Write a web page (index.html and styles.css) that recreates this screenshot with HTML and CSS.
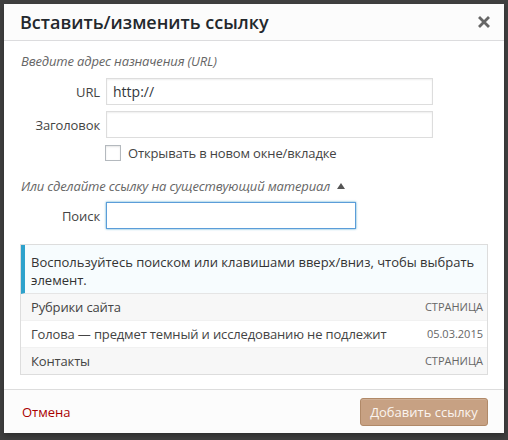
FILE: index.html
```html
<!DOCTYPE html>
<html lang="ru">
<head>
<meta charset="utf-8">
<link rel="stylesheet" href="styles.css">
</head>
<body>
<div class="backdrop">
  <div class="dialog">
    <div class="header">
      <h1 class="title">Вставить/изменить ссылку</h1>
      <span class="close"><svg width="12" height="12" viewBox="0 0 12 12"><path d="M2 2 L10 10 M10 2 L2 10" stroke="#666" stroke-width="2.8" stroke-linecap="square"/></svg></span>
    </div>
    <div class="body">
      <p class="howto">Введите адрес назначения (URL)</p>
      <div class="row">
        <label class="label">URL</label>
        <div class="input wide">http://</div>
      </div>
      <div class="row">
        <label class="label">Заголовок</label>
        <div class="input wide"></div>
      </div>
      <div class="row check-row">
        <span class="checkbox"></span>
        <span class="check-text">Открывать в новом окне/вкладке</span>
      </div>
      <p class="howto toggle">Или сделайте ссылку на существующий материал <span class="arrow"></span></p>
      <div class="row">
        <label class="label">Поиск</label>
        <div class="input search"></div>
      </div>
      <div class="results">
        <div class="notice">Воспользуйтесь поиском или клавишами вверх/вниз, чтобы выбрать элемент.</div>
        <ul class="list">
          <li class="item alt"><span>Рубрики сайта</span><span class="info">Страница</span></li>
          <li class="item"><span>Голова — предмет темный и исследованию не подлежит</span><span class="info date">05.03.2015</span></li>
          <li class="item alt"><span>Контакты</span><span class="info">Страница</span></li>
        </ul>
      </div>
    </div>
    <div class="footer">
      <a class="cancel">Отмена</a>
      <button class="submit">Добавить ссылку</button>
    </div>
  </div>
</div>
</body>
</html>
```
FILE: styles.css
```css
* { box-sizing: border-box; }
html, body { margin: 0; padding: 0; }
body {
  width: 508px;
  height: 440px;
  background: #404040;
  font-family: "Open Sans", "DejaVu Sans", sans-serif;
  font-size: 13px;
  color: #444;
  overflow: hidden;
}
.backdrop { padding: 4px 4px 0 4px; }
.dialog {
  width: 500px;
  height: 429px;
  background: #fff;
  display: flex;
  flex-direction: column;
  box-shadow: 0 3px 6px rgba(0,0,0,.3);
}
.header {
  height: 37px;
  background: #fcfcfc;
  border-bottom: 1px solid #dcdcde;
  display: flex;
  align-items: center;
  justify-content: space-between;
  padding: 0 14px 0 16px;
}
.title {
  margin: 0;
  font-size: 18px;
  font-weight: 600;
  color: #23282d;
  line-height: 36px;
}
.close { display: flex; width: 12px; height: 12px; margin-top: -1px; }
.body { flex: 1; padding: 0 16px; }
.howto {
  margin: 10px 0 0 1px;
  font-style: italic;
  color: #666;
  line-height: 20px;
  letter-spacing: -0.15px;
}
.row { display: flex; align-items: center; gap: 6px; margin-top: 6px; }
.howto + .row { margin-top: 7px; }
.label {
  width: 80px;
  text-align: right;
  color: #444;
  letter-spacing: -0.1px;
}
.input {
  height: 27px;
  border: 1px solid #ddd;
  box-shadow: inset 0 1px 2px rgba(0,0,0,.07);
  background: #fff;
  font-size: 14px;
  color: #32373c;
  padding: 0 6px;
  line-height: 25px;
}
.wide { width: 327px; }
.search {
  width: 250px;
  border-color: #5b9dd9;
  box-shadow: 0 0 2px rgba(30,140,190,.8);
}
.check-row { margin-top: 7px; gap: 7px; padding-left: 85px; }
.checkbox {
  width: 16px;
  height: 16px;
  border: 1px solid #b4b9be;
  box-shadow: inset 0 1px 2px rgba(0,0,0,.1);
  background: #fff;
}
.check-text { color: #444; line-height: 16px; letter-spacing: -0.15px; }
.toggle { margin-top: 15px; }
.toggle + .row { margin-top: 6px; }
.arrow {
  display: inline-block;
  width: 0; height: 0;
  border-left: 4px solid transparent;
  border-right: 4px solid transparent;
  border-bottom: 6px solid #555;
  margin-left: 4px;
  vertical-align: 2px;
}
.results {
  margin-top: 15px;
  border: 1px solid #ddd;
  height: 131px;
  overflow: hidden;
}
.notice {
  border-left: 4px solid #2ea2cc;
  background: #f7fcfe;
  padding: 8px 10px 4px 6px;
  line-height: 18px;
  color: #333;
  border-bottom: 1px solid #e5e5e5;
  height: 49px;
}
.list { list-style: none; margin: 0; padding: 0; }
.item {
  height: 27px;
  display: flex;
  align-items: center;
  justify-content: space-between;
  padding: 0 4px 1px 10px;
  border-bottom: 1px solid #f1f1f1;
  color: #444;
  background: #fff;
  letter-spacing: -0.15px;
}
.item.alt { background: #f7f7f7; }
.info {
  font-size: 11px;
  color: #666;
  text-transform: uppercase;
  letter-spacing: 0;
}
.info.date { text-transform: none; }
.footer {
  height: 44px;
  background: #fcfcfc;
  border-top: 1px solid #ddd;
  display: flex;
  align-items: center;
  justify-content: space-between;
  padding: 1px 16px 0 18px;
}
.cancel { color: #a00; text-decoration: none; font-size: 13px; }
.submit {
  width: 128px;
  height: 28px;
  background: #c7a183;
  border: 1px solid #b08968;
  border-radius: 3px;
  color: #fbf5f0;
  font-family: "Open Sans", "DejaVu Sans", sans-serif;
  font-size: 13px;
  padding: 0;
  box-shadow: inset 0 1px 0 rgba(255,255,255,.15);
}
```
